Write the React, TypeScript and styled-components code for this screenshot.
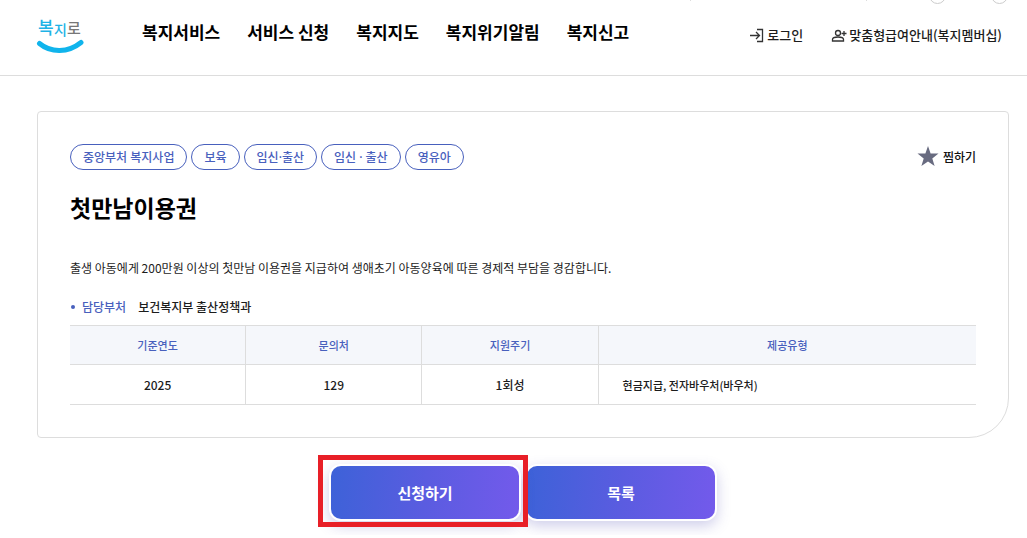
import React from 'react';
import styled, { createGlobalStyle } from 'styled-components';

const GlobalStyle = createGlobalStyle`
  *, *::before, *::after { box-sizing: border-box; }
  body {
    margin: 0;
    background: #fff;
    color: #1c1c1c;
    font-family: "Noto Sans CJK KR", "Noto Sans", sans-serif;
    font-size: 12px;
    font-weight: 500;
    line-height: 18px;
  }
`;

const Header = styled.header`
  border-bottom: 1px solid #ddd;
`;

const UtilityBar = styled.div`
  display: flex;
  justify-content: flex-end;
  align-items: flex-end;
  height: 4px;
  padding-right: 19px;
  overflow: hidden;
`;

const Divider = styled.span<{ $gap: number }>`
  flex: none;
  width: 1px;
  height: 12px;
  margin: 0 ${p => p.$gap}px 3px 0;
  background: #ddd;
`;

const ZoomDot = styled.span<{ $gap?: number }>`
  flex: none;
  width: 17px;
  height: 17px;
  margin-right: ${p => p.$gap ?? 0}px;
  border: 1px solid #ccc;
  border-radius: 50%;
`;

const HeaderRow = styled.div`
  display: flex;
  align-items: center;
  height: 71px;
  padding: 0 25px 16px 36px;
`;

const LogoLink = styled.a`
  display: block;
  width: 48px;
  height: 46px;
  margin-right: 58px;
`;

const Nav = styled.nav`
  display: flex;
  gap: 27px;
`;

const NavLink = styled.a`
  color: #000;
  font-size: 17px;
  font-weight: 700;
  line-height: 24px;
  text-decoration: none;
  white-space: nowrap;
`;

const Account = styled.div`
  display: flex;
  gap: 28px;
  margin-left: auto;
  padding-top: 6px;
`;

const AccountLink = styled.a`
  display: flex;
  align-items: center;
  gap: 2px;
  color: #1c1c1c;
  font-size: 13px;
  line-height: 20px;
  text-decoration: none;
  white-space: nowrap;
`;

const Main = styled.main`
  padding: 35px 18px 16px 37px;
`;

const Card = styled.section`
  padding: 32px;
  border: 1px solid #ddd;
  border-radius: 4px 4px 40px 4px;
`;

const CardTop = styled.div`
  display: flex;
  justify-content: space-between;
  align-items: center;
`;

const Tags = styled.ul`
  display: flex;
  gap: 4px;
  margin: 0;
  padding: 0;
  list-style: none;
`;

const Tag = styled.li`
  padding: 4px 12px 2px;
  border: 1px solid #4860bd;
  border-radius: 13px;
  color: #4860bd;
  font-family: "Noto Sans", "Noto Sans CJK KR", sans-serif;
  white-space: nowrap;
`;

const WishButton = styled.button`
  display: flex;
  align-items: center;
  gap: 4px;
  padding: 0;
  border: 0;
  background: none;
  color: #111;
  font: inherit;
  cursor: pointer;
`;

const Title = styled.h1`
  margin: 20px 0 0;
  color: #000;
  font-size: 23px;
  font-weight: 700;
  line-height: 34px;
`;

const Description = styled.p`
  margin: 35px 0 0;
  font-weight: 400;
`;

const Department = styled.dl`
  display: flex;
  align-items: center;
  margin: 21px 0 9px;
`;

const DepartmentName = styled.dt`
  display: flex;
  align-items: center;
  gap: 7px;
  margin-right: 12px;
  color: #4860bd;

  &::before {
    content: "";
    width: 4px;
    height: 4px;
    margin-left: 1px;
    border-radius: 50%;
    background: #4860bd;
  }
`;

const DepartmentValue = styled.dd`
  margin: 0;
`;

const Table = styled.table`
  width: 100%;
  border-collapse: separate;
  border-spacing: 0;
  table-layout: fixed;
  border-top: 1px solid #ddd;
`;

const HeadCell = styled.th<{ $wide?: boolean }>`
  width: ${p => (p.$wide ? 'auto' : '19.45%')};
  height: 39px;
  padding: 0 24px;
  border-right: ${p => (p.$wide ? '0' : '1px solid #ddd')};
  border-bottom: 1px solid #ddd;
  background: #f5f7fb;
  color: #4860bd;
  font-size: 11px;
  font-weight: 500;
`;

const Cell = styled.td<{ $wide?: boolean }>`
  height: 40px;
  padding: 0 24px;
  border-right: ${p => (p.$wide ? '0' : '1px solid #ddd')};
  border-bottom: 1px solid #ddd;
  font-size: ${p => (p.$wide ? 11 : 12)}px;
  text-align: ${p => (p.$wide ? 'left' : 'center')};
`;

const Actions = styled.div`
  display: flex;
  justify-content: center;
  gap: 8px;
  padding-top: 28px;
`;

const ActionButton = styled.button`
  width: 188px;
  height: 53px;
  padding: 0;
  border: 0;
  border-radius: 10px;
  background: linear-gradient(95deg, #3d62d8, #5a5ce0 50%, #735aeb);
  box-shadow: 0 0 0 2px #fff, 0 5px 14px 2px rgba(84, 80, 180, 0.28);
  color: #fff;
  font: inherit;
  font-size: 15px;
  font-weight: 700;
  cursor: pointer;
`;

const Highlighted = styled.div`
  position: relative;
  z-index: 1;

  &::after {
    content: "";
    position: absolute;
    inset: -11px -9px -8px -13px;
    border: 5px solid #e81f27;
    pointer-events: none;
  }
`;

const LogoMark = () => (
  <svg width="48" height="46" viewBox="0 0 48 46" role="img" aria-label="복지로">
    <g fontFamily="Noto Sans CJK KR, sans-serif" fontWeight="500">
      <text x="2" y="25" fontSize="17" fill="#1eb3e6">복</text>
      <text x="18" y="26" fontSize="14" fill="#1eb3e6">지</text>
      <text x="31" y="25" fontSize="15" fill="#777">로</text>
    </g>
    <path d="M3.500 34.500C15 44 32 44 45 33.500" fill="none" stroke="#10b4ec" strokeWidth="5" strokeLinecap="round" />
  </svg>
);

const LoginIcon = () => (
  <svg width="16" height="16" viewBox="0 0 16 16" fill="none" stroke="#333" strokeWidth="1.300" aria-hidden="true">
    <path d="M1 8.500h9.500M7 5 10.500 8.500 7 12M8 2.500h5.500v12H8" />
  </svg>
);

const MemberIcon = () => (
  <svg width="16" height="16" viewBox="0 0 16 16" fill="none" stroke="#333" strokeWidth="1.300" aria-hidden="true">
    <circle cx="7" cy="6" r="2.500" />
    <path d="M1.500 14v-1.500c0-1.500 2.500-2.500 5.500-2.500s5.500 1 5.500 2.500V14ZM10.500 6.500h5M13 4v5" />
  </svg>
);

const StarIcon = () => (
  <svg width="22" height="22" viewBox="0 0 22 22" fill="#686b80" aria-hidden="true">
    <path d="M11 0 13.600 7.500H21.500L15.300 12.500 17.600 20 11 15.500 4.400 20 6.700 12.500 0.500 7.500H8.400Z" />
  </svg>
);

const menus = ['복지서비스', '서비스 신청', '복지지도', '복지위기알림', '복지신고'];
const tags = ['중앙부처 복지사업', '보육', '임신·출산', '임신 · 출산', '영유아'];

export default function App() {
  return (
    <>
      <GlobalStyle />
      <Header>
        <UtilityBar>
          <Divider $gap={175} />
          <Divider $gap={62} />
          <ZoomDot $gap={45} />
          <ZoomDot />
        </UtilityBar>
        <HeaderRow>
          <LogoLink href="#home"><LogoMark /></LogoLink>
          <Nav>
            {menus.map(menu => <NavLink href="#menu" key={menu}>{menu}</NavLink>)}
          </Nav>
          <Account>
            <AccountLink href="#login"><LoginIcon />로그인</AccountLink>
            <AccountLink href="#membership"><MemberIcon />맞춤형급여안내(복지멤버십)</AccountLink>
          </Account>
        </HeaderRow>
      </Header>
      <Main>
        <Card>
          <CardTop>
            <Tags>{tags.map(tag => <Tag key={tag}>{tag}</Tag>)}</Tags>
            <WishButton type="button"><StarIcon />찜하기</WishButton>
          </CardTop>
          <Title>첫만남이용권</Title>
          <Description>
            출생 아동에게 200만원 이상의 첫만남 이용권을 지급하여 생애초기 아동양육에 따른 경제적 부담을 경감합니다.
          </Description>
          <Department>
            <DepartmentName>담당부처</DepartmentName>
            <DepartmentValue>보건복지부 출산정책과</DepartmentValue>
          </Department>
          <Table>
            <thead>
              <tr>
                <HeadCell scope="col">기준연도</HeadCell>
                <HeadCell scope="col">문의처</HeadCell>
                <HeadCell scope="col">지원주기</HeadCell>
                <HeadCell scope="col" $wide>제공유형</HeadCell>
              </tr>
            </thead>
            <tbody>
              <tr>
                <Cell>2025</Cell>
                <Cell>129</Cell>
                <Cell>1회성</Cell>
                <Cell $wide>현금지급, 전자바우처(바우처)</Cell>
              </tr>
            </tbody>
          </Table>
        </Card>
        <Actions>
          <Highlighted><ActionButton type="button">신청하기</ActionButton></Highlighted>
          <ActionButton type="button">목록</ActionButton>
        </Actions>
      </Main>
    </>
  );
}
